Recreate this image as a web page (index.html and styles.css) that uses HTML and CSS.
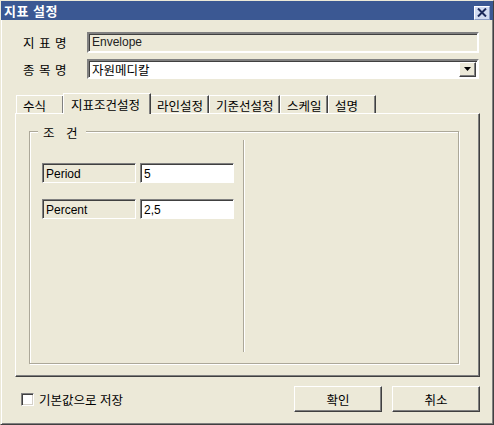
FILE: index.html
```html
<!DOCTYPE html>
<html lang="ko">
<head>
    <meta charset="UTF-8">
    <title>지표 설정</title>
    <link rel="stylesheet" href="styles.css">
</head>
<body>
    <div class="window">
        <div class="titlebar">
            <span class="title">지표 설정</span>
            <button class="close-btn" aria-label="닫기">
                <svg width="10" height="9" viewBox="0 0 10 9">
                    <path d="M1 0.5 L9 8.5 M9 0.5 L1 8.5" stroke="#1c2a5a" stroke-width="2"/>
                </svg>
            </button>
        </div>

        <div class="content">
            <div class="fields">
                <label class="field-label">지 표 명</label>
                <div class="field field-disabled">Envelope</div>
                <label class="field-label">종 목 명</label>
                <div class="field combo">
                    <span class="ko">자원메디칼</span>
                    <span class="combo-btn">
                        <svg width="7" height="4" viewBox="0 0 7 4"><path d="M0 0 H7 L3.5 4 Z" fill="#000"/></svg>
                    </span>
                </div>
            </div>

            <div class="tabs">
                <div class="tab tab-s">수식</div>
                <div class="tab active">지표조건설정</div>
                <div class="tab tab-m">라인설정</div>
                <div class="tab tab-l">기준선설정</div>
                <div class="tab tab-s">스케일</div>
                <div class="tab tab-s">설명</div>
            </div>
            <div class="panel">
                <div class="group">
                    <span class="legend">조 건</span>
                    <div class="group-body">
                        <div class="params">
                            <div class="param-row">
                                <div class="param-name">Period</div>
                                <div class="param-value">5</div>
                            </div>
                            <div class="param-row">
                                <div class="param-name">Percent</div>
                                <div class="param-value">2,5</div>
                            </div>
                        </div>
                        <div class="divider"></div>
                    </div>
                </div>
            </div>

            <div class="footer">
                <label class="check">
                    <span class="check-box"></span>
                    기본값으로 저장
                </label>
                <div class="buttons">
                    <button class="btn">확인</button>
                    <button class="btn">취소</button>
                </div>
            </div>
        </div>
    </div>
</body>
</html>
```

FILE: styles.css
```css
* {
    box-sizing: border-box;
}

body {
    margin: 0;
    font-family: "Liberation Sans", "Noto Sans CJK KR", sans-serif;
    font-size: 12px;
    color: #000;
}

/* 한글 글자는 약간 크게 */
.ko,
.field-label,
.tab,
.legend,
.check,
.btn {
    font-size: 12.5px;
}

.window {
    width: 494px;
    height: 425px;
    background: #ece9d8;
    border: 1px solid;
    border-color: #ece9d8 #404040 #404040 #ece9d8;
    box-shadow: inset 1px 1px #fff, inset -1px -1px #808080;
}

/* 타이틀 바 */
.titlebar {
    height: 19px;
    background: #3b5893;
    display: flex;
    justify-content: space-between;
    align-items: center;
    padding: 0 3px 0 3px;
}

.title {
    color: #fff;
    font-weight: bold;
    font-size: 13px;
    letter-spacing: 0.5px;
}

.close-btn {
    width: 16px;
    height: 14px;
    padding: 0;
    margin-top: 4px;
    background: #d2dcf2;
    border: 1px solid;
    border-color: #fff #8a9cc4 #8a9cc4 #fff;
    display: flex;
    align-items: center;
    justify-content: center;
}

/* 본문 */
.content {
    padding: 12px 13px 0 14px;
}

.fields {
    display: grid;
    grid-template-columns: 65px 392px;
    grid-template-rows: 21px 20px;
    row-gap: 6px;
    margin-left: 7px;
}

.field-label {
    display: flex;
    align-items: center;
    padding-left: 1px;
    letter-spacing: 0.5px;
}

.field {
    border: 2px solid;
    border-color: #808080 #fff #fff #808080;
    box-shadow: inset 1px 1px #404040;
    display: flex;
    align-items: center;
    padding: 0 3px 1px 3px;
}

.field-disabled {
    background: #ece9d8;
    color: #222;
}

.combo {
    background: #fff;
    justify-content: space-between;
    padding-right: 0;
    padding-bottom: 0;
}

.combo-btn {
    width: 17px;
    height: 15px;
    margin-right: 1px;
    background: #ece9d8;
    border: 1px solid;
    border-color: #fff #404040 #404040 #fff;
    box-shadow: inset -1px -1px #808080;
    display: flex;
    align-items: center;
    justify-content: center;
}

/* 탭 */
.tabs {
    display: flex;
    align-items: flex-end;
    height: 20px;
    margin-top: 14px;
    padding-left: 1px;
}

.tab {
    height: 18px;
    padding: 1px 0 0 6px;
    border: 1px solid;
    border-bottom: none;
    border-color: #fff #404040 #fff #fff;
    box-shadow: inset -1px 0 #808080;
    display: flex;
    align-items: center;
    flex-shrink: 0;
}

.tab-s {
    width: 48px;
}

.tab-m {
    width: 59px;
}

.tab-l {
    width: 71px;
}

.tab.active {
    width: 88px;
    height: 21px;
    margin: 0 -1px -1px;
    padding: 0 0 0 7px;
    background: #ece9d8;
    position: relative;
    z-index: 1;
}

.panel {
    height: 264px;
    width: 465px;
    border: 1px solid;
    border-color: #fff #404040 #404040 #fff;
    box-shadow: inset -1px -1px #808080;
    padding: 17px 0 0 13px;
}

/* 그룹 박스 */
.group {
    position: relative;
    width: 430px;
    height: 233px;
    border: 1px solid #aca899;
    box-shadow: 1px 1px #fff, inset 1px 1px #fff;
}

.legend {
    position: absolute;
    top: -9px;
    left: 8px;
    padding: 0 5px;
    background: #ece9d8;
    letter-spacing: 4px;
}

.group-body {
    display: flex;
    padding: 8px 0 0 12px;
}

.params {
    width: 201px;
    padding-top: 23px;
    display: flex;
    flex-direction: column;
    gap: 16px;
}

.param-row {
    display: flex;
    gap: 4px;
}

.param-name,
.param-value {
    width: 94px;
    height: 20px;
    border: 1px solid;
    border-color: #808080 #fff #fff #808080;
    box-shadow: inset 1px 1px #404040;
    padding: 1px 0 0 3px;
    display: flex;
    align-items: center;
}

.param-name {
    background: #ece9d8;
}

.param-value {
    background: #fff;
}

.divider {
    width: 2px;
    height: 212px;
    border-left: 1px solid #aca899;
    border-right: 1px solid #fff;
}

/* 하단 */
.footer {
    display: flex;
    justify-content: space-between;
    align-items: center;
    margin-top: 9px;
    height: 26px;
}

.check {
    display: flex;
    align-items: center;
    gap: 5px;
    margin-left: 6px;
}

.check-box {
    width: 13px;
    height: 13px;
    background: #fff;
    border: 1px solid;
    border-color: #808080 #fff #fff #808080;
    box-shadow: inset 1px 1px #404040, inset -1px -1px #d4d0c8;
}

.buttons {
    display: flex;
    gap: 10px;
}

.btn {
    width: 88px;
    height: 26px;
    font-family: "Liberation Sans", "Noto Sans CJK KR", sans-serif;
    background: #ece9d8;
    border: 1px solid;
    border-color: #fff #404040 #404040 #fff;
    box-shadow: inset -1px -1px #808080;
    padding: 0;
}
```
